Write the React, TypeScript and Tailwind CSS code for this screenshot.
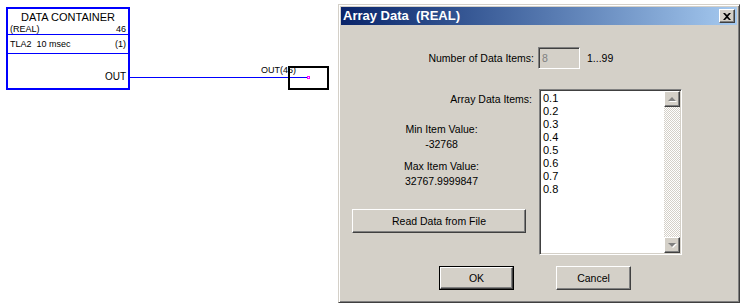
import React from "react";

const FONT = { fontFamily: '"Liberation Sans", Arial, sans-serif' };

const raised =
  "border border-t-white border-l-white border-r-[#404040] border-b-[#404040] shadow-[inset_-1px_-1px_#808080]";
const sunken =
  "border border-t-[#808080] border-l-[#808080] border-r-white border-b-white shadow-[inset_1px_1px_#404040,inset_-1px_-1px_#d4d0c8]";

const ScrollArrow = ({ up }: { up?: boolean }) => (
  <div className={`w-[16px] h-[16px] bg-[#d4d0c8] flex items-center justify-center ${raised}`}>
    <svg width="9" height="6" viewBox="0 0 9 6">
      {up ? (
        <>
          <polygon points="5,2 9,6 1,6" fill="#ffffff" />
          <polygon points="4,1 8,5 0,5" fill="#808080" />
        </>
      ) : (
        <>
          <polygon points="1,2 9,2 5,6" fill="#ffffff" />
          <polygon points="0,1 8,1 4,5" fill="#808080" />
        </>
      )}
    </svg>
  </div>
);

const DataBlock = () => (
  <div className="absolute left-[6px] top-[7px] w-[124px] h-[83px] border-2 border-[#0000ff] bg-white flex flex-col text-black">
    <div className="h-[15px] text-[11px] leading-[13px] text-center pt-[2px]">DATA CONTAINER</div>
    <div className="h-[10px] flex justify-between items-center px-[2px] text-[9px] leading-[10px]">
      <span>(REAL)</span>
      <span>46</span>
    </div>
    <div className="h-px bg-[#0000ff]" />
    <div className="h-[18px] flex justify-between items-center px-[2px] text-[9px] leading-[10px]">
      <span>TLA2&nbsp;&nbsp;10 msec</span>
      <span>(1)</span>
    </div>
    <div className="h-px bg-[#0000ff]" />
    <div className="flex-1 flex items-end justify-end pr-[2px] pb-[5px] text-[10px] leading-[12px]">OUT</div>
  </div>
);

export default function App() {
  const items = ["0.1", "0.2", "0.3", "0.4", "0.5", "0.6", "0.7", "0.8"];

  return (
    <div className="relative w-[743px] h-[308px] bg-white overflow-hidden" style={FONT}>
      {/* diagram canvas */}
      <DataBlock />
      <div className="absolute left-[130px] top-[77px] w-[178px] h-px bg-[#0000ff]" />
      <div className="absolute left-[307px] top-[76px] w-[3px] h-[3px] border border-[#ff00ff] bg-white" />
      <div className="absolute left-[288px] top-[66px] w-[41px] h-[24px] border-2 border-black" />
      <div className="absolute left-[261px] top-[65px] text-[9px] leading-[11px] text-black">OUT(46)</div>

      {/* dialog window */}
      <div
        className="absolute left-[338px] top-[4px] w-[402px] h-[299px] bg-[#d4d0c8] p-[2px] border border-t-[#d4d0c8] border-l-[#d4d0c8] border-r-[#404040] border-b-[#404040] shadow-[inset_1px_1px_#ffffff,inset_-1px_-1px_#808080] flex flex-col text-[10.5px] leading-[13px] text-black"
      >
        <div className="h-[18px] flex items-center justify-between pl-[2px] pr-[2px] bg-gradient-to-r from-[#0a246a] to-[#a6caf0]">
          <span className="text-white font-bold text-[13px] leading-[18px] whitespace-pre">Array Data  (REAL)</span>
          <div className={`w-[16px] h-[14px] bg-[#d4d0c8] flex items-center justify-center ${raised}`}>
            <svg width="8" height="7" viewBox="0 0 8 7">
              <path d="M0 0h2l2 2 2-2h2L5 3.5 8 7H6L4 5 2 7H0l3-3.5z" fill="#000" />
            </svg>
          </div>
        </div>

        {/* count row */}
        <div className="mt-[22px] h-[22px] flex items-center">
          <div className="w-[197px] text-right pr-[4px]">Number of Data Items:</div>
          <div className={`w-[42px] h-[22px] bg-[#d4d0c8] text-[#808080] pl-[3px] flex items-center ${sunken}`}>8</div>
          <div className="ml-[7px]">1...99</div>
        </div>

        {/* items row */}
        <div className="mt-[20px] flex h-[166px]">
          <div className="w-[197px] flex flex-col">
            <div className="mt-[4px] text-right pr-[6px]">Array Data Items:</div>
            <div className="pl-[4px] flex flex-col items-center">
              <div className="mt-[17px]">Min Item Value:</div>
              <div className="mt-[2px]">-32768</div>
              <div className="mt-[9px]">Max Item Value:</div>
              <div className="mt-[2px]">32767.9999847</div>
            </div>
            <button
              className={`mt-[21px] ml-[11px] w-[174px] h-[24px] bg-[#d4d0c8] ${raised}`}
            >
              Read Data from File
            </button>
          </div>
          <div className={`ml-[1px] w-[143px] h-[166px] bg-white p-[1px] flex ${sunken}`}>
            <div className="flex-1 pl-[2px] pt-[1px] text-[11px] leading-[13px]">
              {items.map((v) => (
                <div key={v}>{v}</div>
              ))}
            </div>
            <div className="w-[16px] flex flex-col bg-[image:repeating-conic-gradient(#d4d0c8_0%_25%,#ffffff_0%_50%)] bg-[length:2px_2px]">
              <ScrollArrow up />
              <div className="flex-1" />
              <ScrollArrow />
            </div>
          </div>
        </div>

        {/* buttons */}
        <div className="mt-[11px] flex pl-[98px] gap-[42px]">
          <div className="w-[75px] h-[24px] border border-black">
            <button className={`w-full h-full bg-[#d4d0c8] ${raised}`}>OK</button>
          </div>
          <button className={`w-[75px] h-[24px] bg-[#d4d0c8] ${raised}`}>Cancel</button>
        </div>
      </div>
    </div>
  );
}
